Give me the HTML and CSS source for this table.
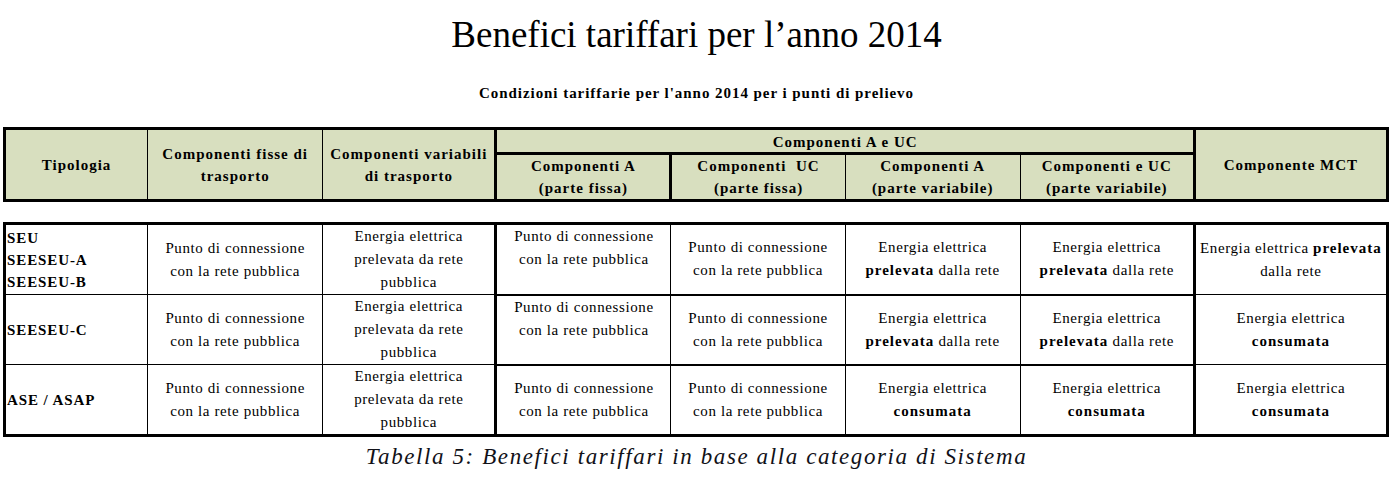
FILE: index.html
```html
<!DOCTYPE html>
<html lang="it">
<head>
<meta charset="utf-8">
<title>Benefici tariffari per l'anno 2014</title>
<link rel="stylesheet" href="styles.css">
</head>
<body>
<h1 class="title">Benefici tariffari per l’anno 2014</h1>
<p class="subtitle">Condizioni tariffarie per l'anno 2014 per i punti di prelievo</p>

<table class="tbl head">
  <colgroup>
    <col class="c1"><col class="c2"><col class="c3"><col class="c4"><col class="c5"><col class="c6"><col class="c7"><col class="c8">
  </colgroup>
  <tr class="h1">
    <th rowspan="2">Tipologia</th>
    <th rowspan="2">Componenti fisse di<br>trasporto</th>
    <th rowspan="2">Componenti variabili<br>di trasporto</th>
    <th colspan="4" class="thick-l thick-r group">Componenti A e UC</th>
    <th rowspan="2" class="thick-l">Componente MCT</th>
  </tr>
  <tr class="h2">
    <th class="thick-l thick-t thick-r">Componenti A<br>(parte fissa)</th>
    <th class="thick-t">Componenti&nbsp; UC<br>(parte fissa)</th>
    <th class="thick-t">Componenti A<br>(parte variabile)</th>
    <th class="thick-t">Componenti e UC<br>(parte variabile)</th>
  </tr>
</table>

<table class="tbl body">
  <colgroup>
    <col class="c1"><col class="c2"><col class="c3"><col class="c4"><col class="c5"><col class="c6"><col class="c7"><col class="c8">
  </colgroup>
  <tr class="r1">
    <td class="tip">SEU<br>SEESEU-A<br>SEESEU-B</td>
    <td>Punto di connessione<br>con la rete pubblica</td>
    <td>Energia elettrica<br>prelevata da rete<br>pubblica</td>
    <td class="thick-l sep top">Punto di connessione<br>con la rete pubblica</td>
    <td class="sep">Punto di connessione<br>con la rete pubblica</td>
    <td class="sep">Energia elettrica<br><b>prelevata</b> dalla rete</td>
    <td class="sep">Energia elettrica<br><b>prelevata</b> dalla rete</td>
    <td class="thick-l">Energia elettrica <b>prelevata</b><br>dalla rete</td>
  </tr>
  <tr class="r2">
    <td class="tip">SEESEU-C</td>
    <td>Punto di connessione<br>con la rete pubblica</td>
    <td>Energia elettrica<br>prelevata da rete<br>pubblica</td>
    <td class="thick-l sep top">Punto di connessione<br>con la rete pubblica</td>
    <td class="sep">Punto di connessione<br>con la rete pubblica</td>
    <td class="sep">Energia elettrica<br><b>prelevata</b> dalla rete</td>
    <td class="sep">Energia elettrica<br><b>prelevata</b> dalla rete</td>
    <td class="thick-l">Energia elettrica<br><b>consumata</b></td>
  </tr>
  <tr class="r3">
    <td class="tip">ASE / ASAP</td>
    <td>Punto di connessione<br>con la rete pubblica</td>
    <td>Energia elettrica<br>prelevata da rete<br>pubblica</td>
    <td class="thick-l">Punto di connessione<br>con la rete pubblica</td>
    <td>Punto di connessione<br>con la rete pubblica</td>
    <td>Energia elettrica<br><b>consumata</b></td>
    <td>Energia elettrica<br><b>consumata</b></td>
    <td class="thick-l">Energia elettrica<br><b>consumata</b></td>
  </tr>
</table>

<p class="caption">Tabella 5: Benefici tariffari in base alla categoria di Sistema</p>
</body>
</html>
```

FILE: styles.css
```css
html, body {
  margin: 0;
  padding: 0;
  background: #ffffff;
}

body {
  font-family: "Liberation Serif", "Times New Roman", serif;
  color: #000000;
}

.title {
  margin: 14px 0 0;
  font-size: 37px;
  line-height: 41px;
  font-weight: normal;
  text-align: center;
}

.subtitle {
  margin: 28px 0 0;
  font-size: 15px;
  line-height: 20px;
  font-weight: bold;
  letter-spacing: 0.95px;
  text-align: center;
}

.tbl {
  border-collapse: collapse;
  table-layout: fixed;
  width: 1386px;
  margin-left: 3px;
  border: 3px solid #000;
}

.c1 { width: 143px; }
.c2 { width: 175px; }
.c3 { width: 173px; }
.c4 { width: 175px; }
.c5 { width: 174px; }
.c6 { width: 175px; }
.c7 { width: 174px; }
.c8 { width: 193px; }

.tbl th,
.tbl td {
  border: 1px solid #000;
  padding: 0 1px;
  text-align: center;
  vertical-align: middle;
}

.head {
  margin-top: 24px;
}

.head th {
  background: #d8dfbf;
  font-size: 15px;
  font-weight: bold;
  letter-spacing: 1px;
  line-height: 22px;
}

.head .h1 { height: 24px; }
.head .h2 { height: 45px; }

.head .group {
  line-height: 20px;
  padding-top: 2px;
}

.thick-l { border-left-width: 3px !important; }
.thick-r { border-right-width: 3px !important; }
.thick-t { border-top-width: 3px !important; }

.body {
  margin-top: 20px;
}

.body td {
  font-size: 15px;
  letter-spacing: 0.6px;
  line-height: 23px;
}

.body b {
  letter-spacing: 1px;
}

.body .r1 { height: 70px; }
.body .r2 { height: 70px; }
.body .r3 { height: 71px; }

.body .sep {
  border-bottom-width: 2px;
}

.body .top {
  vertical-align: top;
}

.body .tip {
  text-align: left;
  font-weight: bold;
  letter-spacing: 0.9px;
  line-height: 22px;
}

.caption {
  margin: 5px 0 0;
  font-size: 23px;
  line-height: 30px;
  font-style: italic;
  letter-spacing: 1.6px;
  text-align: center;
  color: #111118;
}
```
